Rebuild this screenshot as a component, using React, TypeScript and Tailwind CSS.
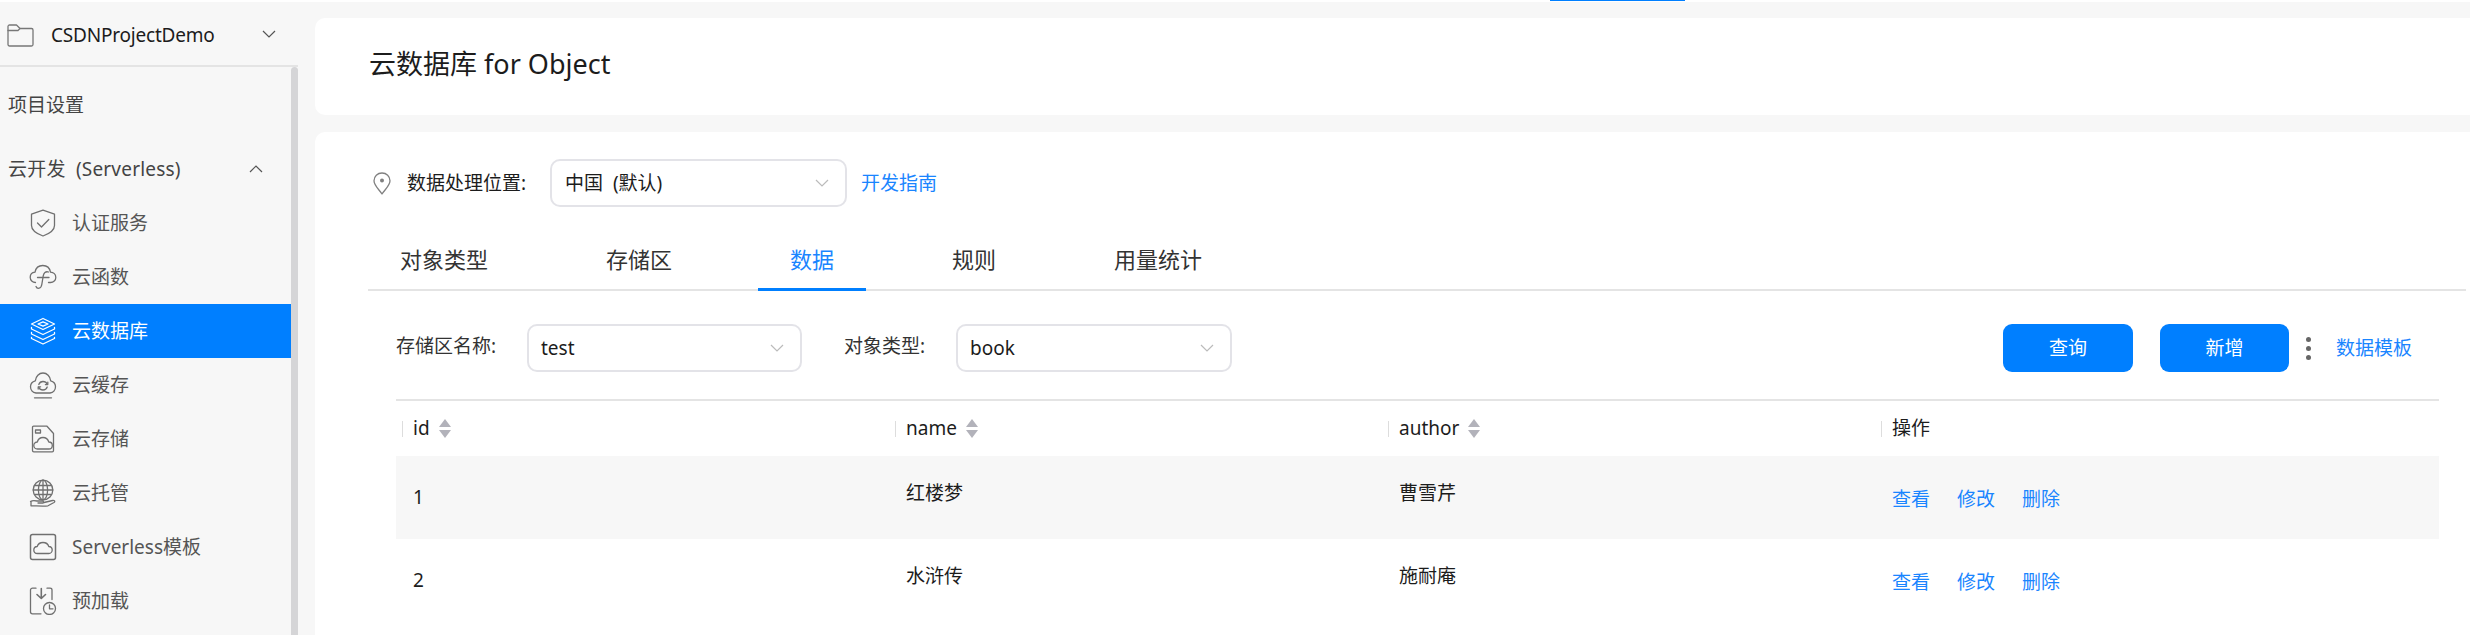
import React from "react";

const S = { fill: "none", stroke: "currentColor", strokeWidth: 1.3, strokeLinecap: "round" as const, strokeLinejoin: "round" as const };

function Chevron({ up, className }: { up?: boolean; className: string }) {
  return (
    <svg viewBox="0 0 14 8" className={className} fill="none" stroke="currentColor" strokeWidth="1.2">
      <path d={up ? "M1 7L7 1L13 7" : "M1 1L7 7L13 1"} />
    </svg>
  );
}

const icons: Record<string, React.ReactNode> = {
  shield: (
    <>
      <path d="M14 1.2L25.5 5.2V16.5C25.5 21.5 19.5 25 14 27C8.5 25 2.5 21.5 2.5 16.5V5.2Z" />
      <path d="M8.5 14L12.5 18L19.8 10.5" />
    </>
  ),
  fn: (
    <>
      <path d="M6.5 19.5C3.5 19.5 1.2 17.2 1.2 14.3C1.2 11.5 3.2 9.5 6 9.2C6.7 5.2 9.8 2.5 13.8 2.5C17.8 2.5 20.8 5.3 21.5 9.2C24.6 9.4 26.8 11.6 26.8 14.4C26.8 17.2 24.5 19.5 21.5 19.5H19.5" />
      <path d="M19.5 9C16.5 8 14.8 10 14.2 13L12.8 21.5C12.2 25.8 8.2 26.5 7 23.5" />
      <path d="M8.5 14.5H20" />
    </>
  ),
  layers: (
    <>
      <path d="M14 1.5L25.5 7L14 12.5L2.5 7Z" />
      <path d="M14 4.8L19 7L14 9.2L9 7Z" />
      <path d="M2.5 10.5V12L14 17.5L25.5 12V10.5" />
      <path d="M2.5 15.5V17L14 22.5L25.5 17V15.5" />
      <path d="M2.5 20.5V21.5L14 27L25.5 21.5V20.5" />
    </>
  ),
  cache: (
    <>
      <path d="M7 22C3.8 21.6 1.5 19 1.5 15.8C1.5 12.8 3.5 10.5 6.3 9.8C6.8 5.5 10 2 14 2C18 2 21.2 5.5 21.7 9.8C24.5 10.5 26.5 12.8 26.5 15.8C26.5 19 24.2 21.6 21 22Z" />
      <path d="M9.8 13.5C10.5 11.5 12.2 10.5 14 10.5C16 10.5 17.5 11.5 18.2 13.2M18.2 16C17.5 18 16 19 14 19C12.2 19 10.5 18 9.8 16.2" />
      <path d="M18.8 11.2V13.6H16.4M9.2 18V15.8H11.6" />
      <path d="M5.5 26.8H22.5" />
    </>
  ),
  storage: (
    <>
      <path d="M4.5 1.2H18L24.5 8.5V25.5C24.5 26.2 24 26.8 23.2 26.8H4.8C4 26.8 3.5 26.2 3.5 25.5V2.2C3.5 1.6 4 1.2 4.5 1.2Z" />
      <rect x="6.5" y="5" width="5" height="3" />
      <path d="M8.5 24C6 24 4.8 22 4.8 20.5C4.8 18.5 6.5 17 8.3 17C9 14.5 11.3 12.5 14 12.5C16.8 12.5 19 14.5 19.8 17C21.7 17 23.3 18.5 23.3 20.5C23.3 22.4 21.8 24 19.8 24Z" />
    </>
  ),
  globe: (
    <>
      <circle cx="14" cy="11" r="9.8" />
      <ellipse cx="14" cy="11" rx="4.6" ry="9.8" />
      <path d="M14 1.2V20.8M4.2 11H23.8M5.5 6.5H22.5M5.5 15.5H22.5" />
      <path d="M1.5 22.5C3 21.5 6 21.5 8 22H13.5C14.8 22 15 24 13.5 24H9M15 23.5L23.5 21.5C25.5 21 26.5 22.5 25 23.5L19 26.8C15 27.5 7 26.8 2 26.8V22.5" />
    </>
  ),
  template: (
    <>
      <rect x="1.5" y="1.5" width="25" height="25" rx="2" strokeWidth="1.5" />
      <path d="M8.5 20.5C6 20.5 4.8 18.6 4.8 17C4.8 15 6.3 13.6 8.2 13.5C9 11 11.3 9.5 14 9.5C16.8 9.5 19 11 19.8 13.5C21.7 13.6 23.2 15 23.2 17C23.2 18.8 21.8 20.5 19.8 20.5Z" />
    </>
  ),
  preload: (
    <>
      <path d="M7 1.2H3.5C2.5 1.2 1.5 2 1.5 3V25C1.5 26 2.5 26.8 3.5 26.8H12" />
      <path d="M18 1.2H21C22.2 1.2 23 2 23 3V12.5" />
      <path d="M12.3 1.5V11M8 7.5L12.3 11.5L16.5 7.5" strokeWidth="1.6" />
      <circle cx="20.5" cy="21.5" r="6" />
      <path d="M20.5 18V21.8H24" />
    </>
  ),
};

function NavItem({ icon, label, active }: { icon: string; label: string; active?: boolean }) {
  return (
    <div className={`h-[54px] flex items-center pl-[29px] gap-[15px] text-[19px] ${active ? "bg-[#007fff] text-white" : "text-[#555555]"}`}>
      <svg viewBox="0 0 28 28" className={`w-[28px] h-[28px] ${active ? "text-white" : "text-[#707070]"}`} {...S}>
        {icons[icon]}
      </svg>
      <span>{label}</span>
    </div>
  );
}

function Select({ value, width, pad }: { value: string; width: string; pad: string }) {
  return (
    <div className={`h-[48px] border-2 border-[#e3e3e8] rounded-[10px] bg-white flex items-center justify-between pr-[16px] text-[19px] text-[#1c1c1c] whitespace-pre ${pad} ${width}`}>
      <span>{value}</span>
      <Chevron className="w-[14px] h-[8px] text-[#bbbbbb]" />
    </div>
  );
}

function Sort() {
  return (
    <svg viewBox="0 0 12 19" className="w-[12px] h-[19px] text-[#b2b2ba] ml-[9px]" fill="currentColor">
      <path d="M6 0L12 8H0Z" />
      <path d="M0 11H12L6 19Z" />
    </svg>
  );
}

function Head({ label, sort }: { label: string; sort?: boolean }) {
  return (
    <div className="flex items-center text-[19px] text-[#1c1c1c]">
      <span className="w-px h-[16px] bg-[#dddddd] mr-[10px]" />
      <span>{label}</span>
      {sort && <Sort />}
    </div>
  );
}

function Row({ id, name, author, shaded }: { id: string; name: string; author: string; shaded?: boolean }) {
  return (
    <div className={`grid grid-cols-[493px_493px_493px_1fr] pl-[6px] h-[83px] text-[19px] text-[#1c1c1c] ${shaded ? "bg-[#f7f7f7]" : ""}`}>
      <div className="flex items-center pl-[11px]">{id}</div>
      <div className="flex items-center pl-[11px] pb-[9px]">{name}</div>
      <div className="flex items-center pl-[11px] pb-[9px]">{author}</div>
      <div className="flex items-center pl-[11px] pt-[3px] gap-[27px] text-[#1a85ff]">
        <span>查看</span>
        <span>修改</span>
        <span>删除</span>
      </div>
    </div>
  );
}

function Tab({ label, active }: { label: string; active?: boolean }) {
  return (
    <div className={`h-[62px] px-[32px] pt-[2px] flex items-center text-[22px] border-b-[3px] ${active ? "text-[#1a85ff] border-[#007fff]" : "text-[#333333] border-transparent"}`}>
      {label}
    </div>
  );
}

export default function App() {
  return (
    <div className="w-[2470px] h-[635px] overflow-hidden bg-[#f7f7f7] font-['Noto_Sans','Noto_Sans_CJK_SC',sans-serif]">
      <div className="h-[2px] bg-white pl-[1550px]">
        <div className="w-[135px] h-px bg-[#007fff]" />
      </div>
      <div className="flex h-[633px]">
        <aside className="w-[298px] shrink-0 flex flex-col">
          <div className="h-[65px] shrink-0 border-b-2 border-[#e4e4e4] flex items-center pl-[7px] pr-[22px] pt-[4px]">
            <svg viewBox="0 0 27 23" className="w-[27px] h-[23px] text-[#777777]" {...S}>
              <path d="M1 20.5V2.5C1 1.5 1.8 1 2.5 1H9.5L13 4.5H24.5C25.4 4.5 26 5.2 26 6V20.5C26 21.4 25.4 22 24.5 22H2.5C1.7 22 1 21.4 1 20.5Z" />
              <path d="M1 6.5H11L13 4.5" />
            </svg>
            <span className="ml-[17px] text-[19px] text-[#1c1c1c] tracking-[-0.2px]">CSDNProjectDemo</span>
            <Chevron className="ml-auto w-[14px] h-[8px] text-[#555555] -mt-[4px]" />
          </div>
          <div className="flex flex-1 min-h-0">
            <nav className="w-[291px] pt-[11px]">
              <div className="h-[54px] flex items-center pl-[8px] text-[19px] text-[#444444]">项目设置</div>
              <div className="h-[54px] mt-[10px] flex items-center justify-between pl-[8px] pr-[28px] text-[19px] text-[#444444] whitespace-pre">
                <span className="tracking-[0.2px]">{"云开发  (Serverless)"}</span>
                <Chevron up className="w-[14px] h-[8px] text-[#555555]" />
              </div>
              <NavItem icon="shield" label="认证服务" />
              <NavItem icon="fn" label="云函数" />
              <NavItem icon="layers" label="云数据库" active />
              <NavItem icon="cache" label="云缓存" />
              <NavItem icon="storage" label="云存储" />
              <NavItem icon="globe" label="云托管" />
              <NavItem icon="template" label="Serverless模板" />
              <NavItem icon="preload" label="预加载" />
            </nav>
            <div className="w-[7px] bg-[#d5d5d7] rounded-t-[4px]" />
          </div>
        </aside>
        <main className="flex-1 min-w-0 pl-[17px] pt-[16px] flex flex-col gap-[17px]">
          <div className="h-[97px] shrink-0 bg-white rounded-l-[10px] flex items-center pl-[54px] pb-[5px] text-[27px] text-[#1c1c1c]">
            云数据库 for Object
          </div>
          <div className="flex-1 bg-white rounded-tl-[10px] pt-[27px] pl-[53px] pr-[4px] flex flex-col">
            <div className="flex items-center pl-[5px] h-[48px]">
              <svg viewBox="0 0 18 23" className="w-[18px] h-[23px] text-[#808080]" {...S}>
                <path d="M9 22C6 17.5 1 13.5 1 8.8C1 4.4 4.5 1 9 1C13.5 1 17 4.4 17 8.8C17 13.5 12 17.5 9 22Z" />
                <circle cx="9" cy="8.5" r="2" fill="currentColor" stroke="none" />
              </svg>
              <span className="ml-[16px] w-[143px] text-[19px] text-[#1c1c1c]">数据处理位置:</span>
              <Select value={"中国  (默认)"} width="w-[297px]" pad="pl-[13px]" />
              <span className="ml-[14px] text-[19px] text-[#1a85ff]">开发指南</span>
            </div>
            <div className="mt-[22px] flex gap-[54px] border-b-2 border-[#e4e4e4] h-[62px]">
              <Tab label="对象类型" />
              <Tab label="存储区" />
              <Tab label="数据" active />
              <Tab label="规则" />
              <Tab label="用量统计" />
            </div>
            <div className="pl-[28px] pr-[27px]">
              <div className="mt-[33px] h-[48px] flex items-center pr-[27px]">
                <span className="w-[131px] text-[19px] text-[#333333] pb-[4px]">存储区名称:</span>
                <Select value="test" width="w-[275px]" pad="pl-[12px]" />
                <span className="ml-[42px] w-[112px] text-[19px] text-[#333333] pb-[4px]">对象类型:</span>
                <Select value="book" width="w-[276px]" pad="pl-[12px]" />
                <button className="ml-auto w-[130px] h-[48px] rounded-[9px] bg-[#007fff] text-white text-[19px]">查询</button>
                <button className="ml-[27px] w-[129px] h-[48px] rounded-[9px] bg-[#007fff] text-white text-[19px]">新增</button>
                <div className="ml-[17px] flex flex-col gap-[4px]">
                  <span className="w-[5px] h-[5px] rounded-full bg-[#666666]" />
                  <span className="w-[5px] h-[5px] rounded-full bg-[#666666]" />
                  <span className="w-[5px] h-[5px] rounded-full bg-[#666666]" />
                </div>
                <span className="ml-[25px] text-[19px] text-[#1a85ff]">数据模板</span>
              </div>
              <div className="mt-[27px] border-t-2 border-[#e4e4e4]">
                <div className="grid grid-cols-[493px_493px_493px_1fr] pl-[6px] h-[55px] items-center">
                  <Head label="id" sort />
                  <Head label="name" sort />
                  <Head label="author" sort />
                  <Head label="操作" />
                </div>
                <Row id="1" name="红楼梦" author="曹雪芹" shaded />
                <Row id="2" name="水浒传" author="施耐庵" />
              </div>
            </div>
          </div>
        </main>
      </div>
    </div>
  );
}
